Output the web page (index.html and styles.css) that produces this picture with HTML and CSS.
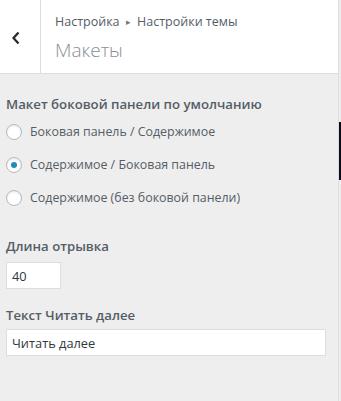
FILE: index.html
```html
<!DOCTYPE html>
<html lang="ru">
<head>
    <meta charset="UTF-8">
    <meta name="viewport" content="width=device-width, initial-scale=1.0">
    <title>Макеты</title>
    <link rel="stylesheet" href="styles.css">
</head>
<body>
    <div class="page">
        <aside class="panel">
            <header class="panel-header">
                <button class="back" type="button" aria-label="Назад">
                    <svg width="10" height="14" viewBox="0 0 10 14">
                        <path d="M7.5 1.5 L2.5 7 L7.5 12.5" fill="none" stroke="#23282d" stroke-width="2.2"/>
                    </svg>
                </button>
                <div class="titles">
                    <p class="crumbs">Настройка <span class="sep">&#9656;</span> Настройки темы</p>
                    <h1 class="title">Макеты</h1>
                </div>
            </header>

            <section class="controls">
                <div class="control">
                    <span class="control-title">Макет боковой панели по умолчанию</span>
                    <label class="radio"><input type="radio" name="layout"> Боковая панель / Содержимое</label>
                    <label class="radio"><input type="radio" name="layout" checked> Содержимое / Боковая панель</label>
                    <label class="radio"><input type="radio" name="layout"> Содержимое (без боковой панели)</label>
                </div>

                <div class="control">
                    <label class="control-title" for="excerpt">Длина отрывка</label>
                    <input class="field field-small" id="excerpt" type="text" value="40">
                </div>

                <div class="control">
                    <label class="control-title tight" for="more">Текст Читать далее</label>
                    <input class="field" id="more" type="text" value="Читать далее">
                </div>
            </section>
        </aside>
        <div class="preview">
            <span class="preview-bar"></span>
        </div>
    </div>
</body>
</html>
```

FILE: styles.css
```css
:root{
    --font: 'Open Sans', 'Noto Sans', sans-serif;
    --bg: #eeeeee;
    --white: #ffffff;
    --border: #dddddd;
    --text: #555d66;
    --dark: #23282d;
    --blue: #0073aa;
}
*,*::before,*::after{
    box-sizing: border-box;
    margin: 0;
    padding: 0;
}
html,body{
    height: 100%;
}
body{
    font-family: var(--font);
    background-color: var(--bg);
    color: var(--text);
}
.page{
    display: flex;
    height: 100%;
}
.panel{
    width: 339px;
    border-right: 1px solid var(--border);
    background-color: var(--bg);
}
.panel-header{
    display: flex;
    height: 74px;
    background-color: var(--white);
    border-bottom: 1px solid var(--border);
}
.back{
    width: 41px;
    flex: none;
    border: none;
    border-right: 1px solid var(--border);
    background: none;
    display: flex;
    align-items: center;
    justify-content: center;
    padding-right: 9px;
    padding-top: 2px;
}
.titles{
    padding: 12px 0 0 14px;
}
.crumbs{
    font-size: 12.5px;
    line-height: 20px;
    color: #555d66;
}
.sep{
    font-size: 9px;
    position: relative;
    top: -1px;
    margin: 0 3px;
    color: #72777c;
}
.title{
    font-size: 19px;
    font-weight: 300;
    line-height: 28px;
    color: #8a9096;
    margin-top: 3px;
}
.controls{
    padding: 20px 6px 0;
}
.control{
    display: flex;
    flex-direction: column;
    margin-bottom: 16px;
}
.control-title{
    font-size: 13.2px;
    font-weight: 600;
    line-height: 20px;
    color: #555d66;
    margin-bottom: 6px;
}
.control-title.tight{
    margin-bottom: 4px;
}
.radio{
    display: flex;
    align-items: center;
    gap: 8px;
    font-size: 12.4px;
    line-height: 20px;
    height: 33px;
    color: #555d66;
    margin-top: -6px;
    margin-bottom: 6px;
}
.radio:first-of-type{
    margin-top: -5px;
}
.radio input{
    appearance: none;
    width: 16px;
    height: 16px;
    border: 1px solid #b4b9be;
    border-radius: 50%;
    background-color: var(--white);
    display: flex;
    align-items: center;
    justify-content: center;
    box-shadow: inset 0 1px 2px rgba(0,0,0,.1);
}
.radio input:checked::before{
    content: '';
    width: 6px;
    height: 6px;
    border-radius: 50%;
    background-color: #1e8cbe;
}
.field{
    font-family: var(--font);
    font-size: 12.8px;
    color: #32373c;
    height: 27px;
    padding: 0 5px;
    border: 1px solid #dddddd;
    background-color: var(--white);
    outline: none;
    width: 320px;
}
.field-small{
    width: 55px;
}
.preview{
    flex: 1;
    background-color: var(--bg);
}
.preview-bar{
    display: block;
    margin-top: 122px;
    height: 58px;
    background-color: #0b0b1a;
}
```
